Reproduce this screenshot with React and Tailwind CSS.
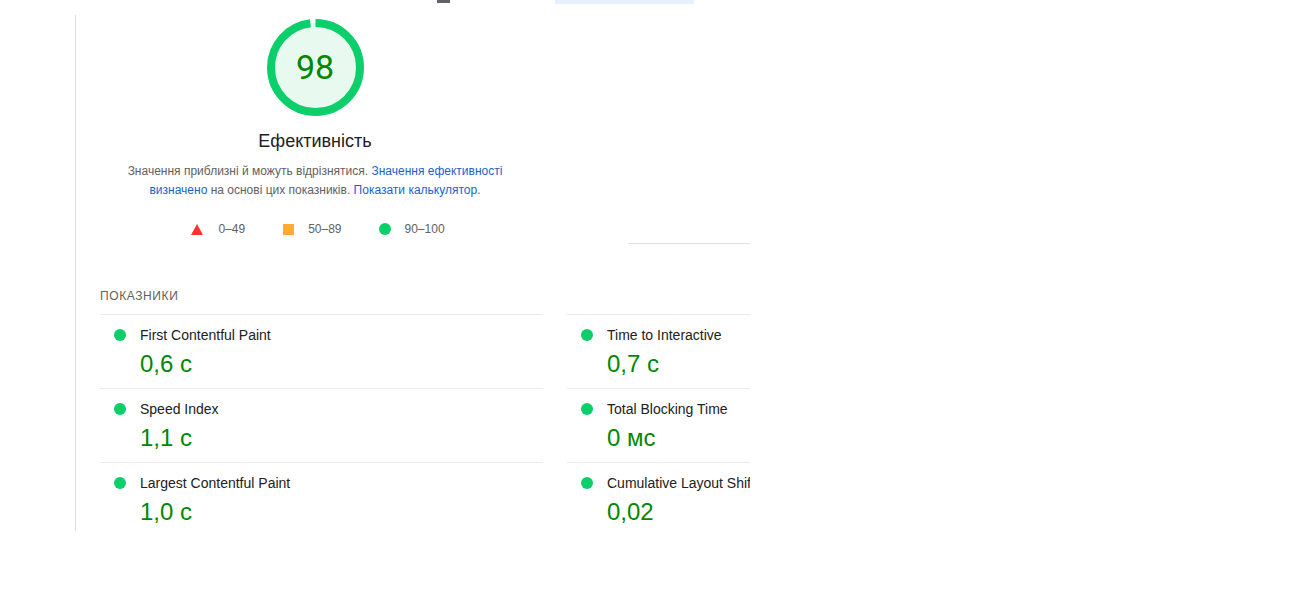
import React from 'react'

const metrics = [
  ['First Contentful Paint', '0,6 с'],
  ['Time to Interactive', '0,7 с'],
  ['Speed Index', '1,1 с'],
  ['Total Blocking Time', '0 мс'],
  ['Largest Contentful Paint', '1,0 с'],
  ['Cumulative Layout Shift', '0,02'],
]

function Gauge({ score }) {
  const r = 44.5
  const c = 2 * Math.PI * r
  return (
    <div className="relative w-[97px] h-[97px]">
      <svg width="97" height="97" viewBox="0 0 97 97" className="-rotate-90">
        <circle cx="48.5" cy="48.5" r={r} fill="#e8f9ef" stroke="none" />
        <circle
          cx="48.5"
          cy="48.5"
          r={r}
          fill="none"
          stroke="#0cce6b"
          strokeWidth="8"
          strokeDasharray={`${(c * score) / 100} ${c}`}
        />
      </svg>
      <div className="absolute inset-0 flex items-center justify-center text-[34px] text-[#008800] font-['Roboto',sans-serif]">
        {score}
      </div>
    </div>
  )
}

function Metric({ name, value }) {
  return (
    <div className="h-[74px] border-t border-[#ebebeb] pl-[14px] pt-[10px] flex">
      <div className="w-3 h-3 rounded-full bg-[#0cce6b] mt-[4px] shrink-0" />
      <div className="ml-[14px] flex flex-col whitespace-nowrap">
        <div className="text-[14px] leading-[20px] text-[#212121]">{name}</div>
        <div className="text-[24px] leading-[28px] text-[#008800] mt-[5px]">{value}</div>
      </div>
    </div>
  )
}

export default function App() {
  return (
    <div className="w-[1295px] h-[595px] bg-white font-['Liberation_Sans',Arial,sans-serif] overflow-hidden">
      <div className="flex h-[4px]">
        <div className="ml-[437px] w-[13px] h-[3px] bg-[#5f6368]" />
        <div className="ml-[105px] w-[139px] h-[4px] bg-[#e8f0fe]" />
      </div>

      <div className="ml-[75px] mt-[11px] w-[675px] h-[516px] border-l border-[#dcdcdc] overflow-hidden">
        <div className="flex">
          <div className="w-[478px] flex flex-col items-center pt-[4px]">
            <Gauge score={98} />
            <div className="mt-[13px] text-[18px] leading-[24px] text-[#212121]">Ефективність</div>
            <p className="mt-[9px] text-[12px] leading-[19px] text-[#616161] text-center whitespace-nowrap">
              Значення приблизні й можуть відрізнятися.{' '}
              <span className="text-[#1a5fd0]">Значення ефективності</span>
              <br />
              <span className="text-[#1a5fd0]">визначено</span> на основі цих показників.{' '}
              <span className="text-[#1a5fd0]">Показати калькулятор</span>.
            </p>
            <div className="mt-[21px] flex items-center text-[12px] leading-[16px] text-[#616161] pl-[6px]">
              <div className="flex items-center">
                <svg width="12" height="11" viewBox="0 0 12 11">
                  <polygon points="6,0 12,11 0,11" fill="#ff3333" />
                </svg>
                <span className="ml-[15px]">0–49</span>
              </div>
              <div className="flex items-center ml-[38px]">
                <div className="w-[11px] h-[11px] bg-[#ffaa33]" />
                <span className="ml-[14px]">50–89</span>
              </div>
              <div className="flex items-center ml-[37px]">
                <div className="w-3 h-3 rounded-full bg-[#0cce6b]" />
                <span className="ml-[14px]">90–100</span>
              </div>
            </div>
          </div>
          <div className="ml-[74px] w-[122px] h-[229px] border-b border-[#e0e0e0] shrink-0" />
        </div>

        <div className="pl-[24px]">
          <div className="mt-[44px] mb-[10px] text-[12px] leading-[16px] tracking-[0.6px] text-[#616161]">
            ПОКАЗНИКИ
          </div>
          <div className="grid grid-cols-[443px_443px] gap-x-[24px]">
            {metrics.map(([n, v]) => (
              <Metric key={n} name={n} value={v} />
            ))}
          </div>
        </div>
      </div>
    </div>
  )
}
